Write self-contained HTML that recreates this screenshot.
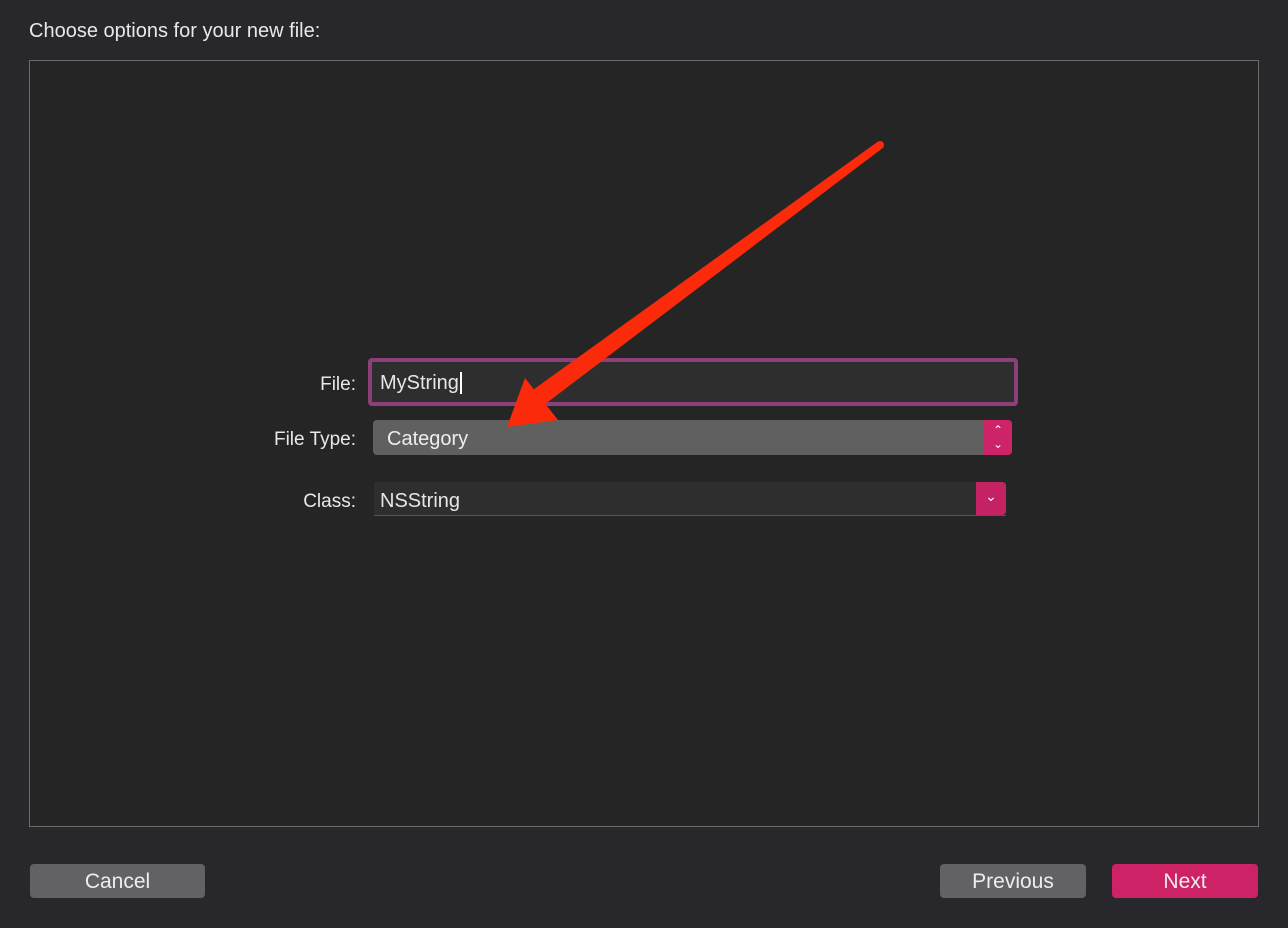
<!DOCTYPE html>
<html><head><style>
body{margin:0;width:1288px;height:928px;background:#28272c;font-family:"Liberation Sans",sans-serif;position:relative;overflow:hidden;color:#e6e6e6}
.t{position:absolute;left:29px;top:20px;font-size:20px;color:#e8e8e8}
.panel{position:absolute;left:29px;top:60px;width:1228px;height:765px;background:#252525;border:1px solid #6a6a6a}
.lbl{position:absolute;font-size:19px;text-align:right;width:200px;color:#e8e8e8}
.f{position:absolute;box-sizing:border-box;font-size:20px}
.btn{position:absolute;top:864px;height:34px;border-radius:4px;background:#626264;color:#eee;font-size:21px;text-align:center;line-height:36px}
</style></head><body>
<div class="t">Choose options for your new file:</div>
<div class="panel"></div>
<div class="lbl" style="left:156px;top:374px">File:</div>
<div class="lbl" style="left:156px;top:429px">File Type:</div>
<div class="lbl" style="left:156px;top:491px">Class:</div>
<div class="f" style="left:368px;top:358px;width:650px;height:48px;border:4px solid #8c3f78;border-radius:4px;background:#2e2e2e;padding:10px 0 0 8px">MyString<span style="border-left:2px solid #fff;margin-left:1px"></span></div>
<div class="f" style="left:373px;top:420px;width:639px;height:35px;background:#606060;border-radius:4px;padding:8px 0 0 14px;color:#eee">Category</div>
<div style="position:absolute;left:984px;top:420px;width:28px;height:35px;background:#cc2467;border-radius:0 4px 4px 0;color:#fff;font-size:12px;text-align:center;line-height:14px;padding-top:3px;box-sizing:border-box">&#8963;<br>&#8964;</div>
<div class="f" style="left:374px;top:482px;width:632px;height:34px;background:#2e2e2e;border-bottom:1px solid #555;padding:8px 0 0 6px">NSString</div>
<div style="position:absolute;left:976px;top:482px;width:30px;height:33px;background:#c52264;border-radius:0 4px 4px 0;color:#fff;font-size:14px;text-align:center;line-height:28px">&#8964;</div>
<svg style="position:absolute;left:0;top:0" width="1288" height="928">
<polygon points="877.6,141.8 882.4,148.2 540.8,407.4 529.2,392.6" fill="#fa2a0a"/>
<circle cx="880" cy="145" r="4" fill="#fa2a0a"/>
<polygon points="507,427 525,378 558,420" fill="#fa2a0a"/>
</svg>
<div class="btn" style="left:30px;width:175px">Cancel</div>
<div class="btn" style="left:940px;width:146px">Previous</div>
<div class="btn" style="left:1112px;width:146px;background:#cd2266">Next</div>
</body></html>
